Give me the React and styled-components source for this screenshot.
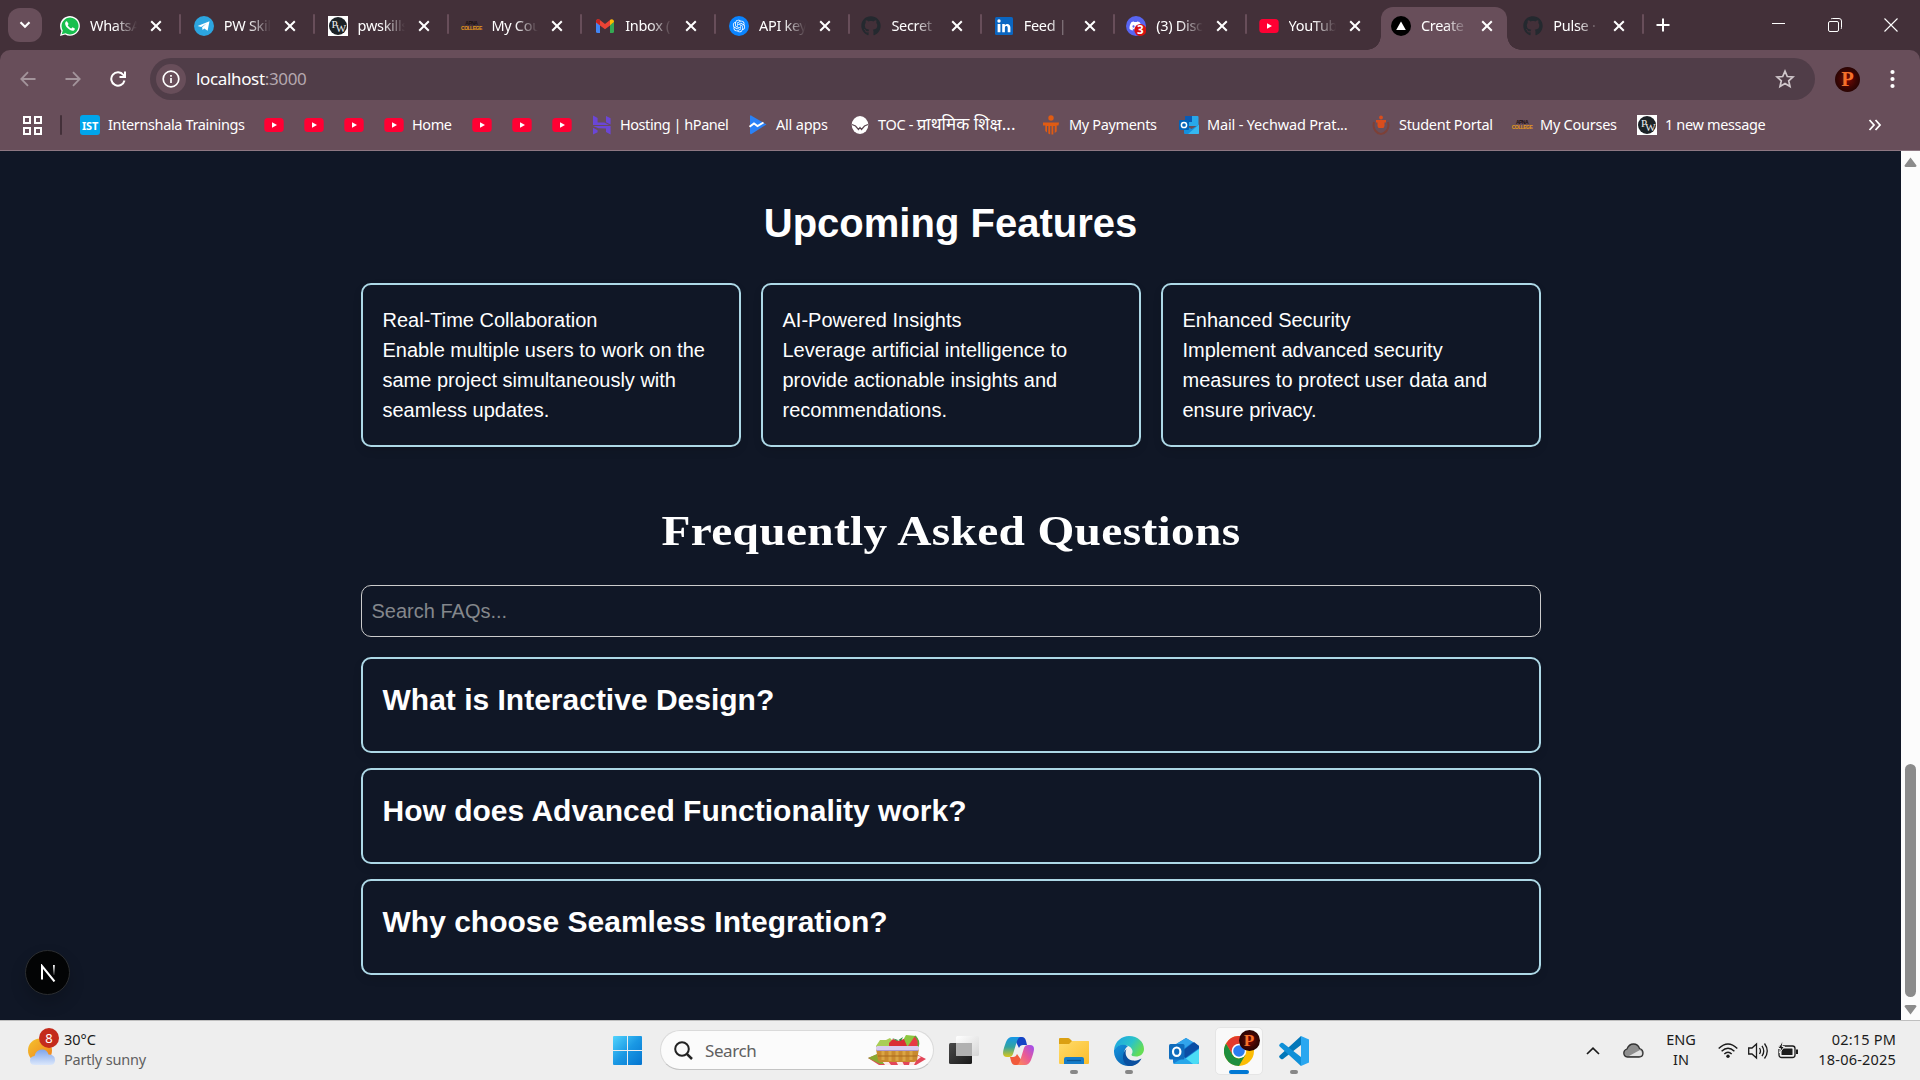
import React from "react";
import styled, { createGlobalStyle, css } from "styled-components";
import { FaGithub, FaDiscord } from "react-icons/fa";
import { RiOpenaiFill } from "react-icons/ri";

const UI = `"Noto Sans", "Open Sans", sans-serif`;
const C = {
  strip: "#433039",
  chrome: "#684e5a",
  omni: "#503d48",
  page: "#101726",
  taskbar: "#eeeeee",
};

const Global = createGlobalStyle`
  * { box-sizing: border-box; }
  body { margin: 0; background: ${C.strip}; overflow: hidden; }
  svg { display: block; flex: none; }
`;

const Screen = styled.div`
  width: 1920px;
  height: 1080px;
  display: flex;
  flex-direction: column;
  overflow: hidden;
  font-family: ${UI};
`;

/* ---------- tab strip ---------- */
const TabStrip = styled.div`
  height: 50px;
  flex: none;
  display: flex;
  background: ${C.strip};
  padding-left: 8px;
`;
const TabSearch = styled.div`
  width: 34px;
  height: 34px;
  margin: 8px 8px 0 0;
  border-radius: 12px;
  background: ${C.chrome};
  display: flex;
  align-items: center;
  justify-content: center;
`;
const TabCell = styled.div`
  flex: 0 0 ${(p) => p.$w}px;
  display: flex;
  padding-top: 7px;
`;
const Tab = styled.div`
  position: relative;
  width: 126px;
  height: 43px;
  padding: 0 0 6px 10px;
  display: flex;
  align-items: center;
  border-radius: 12px 12px 0 0;
  color: #fff;
  ${(p) =>
    p.$active &&
    css`
      background: ${C.chrome};
      &::before,
      &::after {
        content: "";
        position: absolute;
        bottom: 0;
        width: 14px;
        height: 14px;
      }
      &::before {
        left: -14px;
        background: radial-gradient(circle at 0 0, transparent 13.5px, ${C.chrome} 14px);
      }
      &::after {
        right: -14px;
        background: radial-gradient(circle at 100% 0, transparent 13.5px, ${C.chrome} 14px);
      }
    `}
`;
const TabTitle = styled.span`
  flex: 0 0 60px;
  margin: 0 0 2px 10px;
  white-space: nowrap;
  font-size: 14.5px;
  letter-spacing: -0.3px;
  line-height: 24px;
  mask-image: linear-gradient(90deg, #000 24px, transparent 47px);
`;
const TabDivider = styled.div`
  width: 2px;
  height: 20px;
  margin: 7px 0 0 3px;
  border-radius: 1px;
  background: ${(p) => (p.$hidden ? "transparent" : C.chrome)};
`;
const NewTab = styled.div`
  width: 34px;
  height: 50px;
  display: flex;
  align-items: center;
  justify-content: center;
`;
const WindowControls = styled.div`
  margin-left: auto;
  padding-right: 0.75px;
  display: flex;
  align-items: center;
  height: 49px;
`;
const WindowButton = styled.div`
  width: 56.5px;
  display: flex;
  justify-content: center;
`;

/* ---------- toolbar ---------- */
const Toolbar = styled.div`
  height: 50px;
  flex: none;
  display: flex;
  align-items: center;
  padding: 8px 0 0 13px;
  background: ${C.chrome};
  border-radius: 10px 10px 0 0;
`;
const NavButton = styled.div`
  width: 30px;
  margin-right: 15px;
  display: flex;
  justify-content: center;
`;
const Omnibox = styled.div`
  width: 1665px;
  height: 42px;
  margin-left: 2px;
  padding: 0 20px 0 6px;
  border-radius: 21px;
  background: ${C.omni};
  display: flex;
  align-items: center;
`;
const SiteInfo = styled.div`
  width: 30px;
  height: 30px;
  border-radius: 50%;
  background: ${C.chrome};
  display: flex;
  align-items: center;
  justify-content: center;
`;
const Address = styled.div`
  flex: 1;
  margin: 0 0 1px 10px;
  font-size: 17px;
  letter-spacing: -0.35px;
  color: #fff;
  span { color: #b5a8af; }
`;
const Avatar = styled.div`
  width: ${(p) => p.$size}px;
  height: ${(p) => p.$size}px;
  border-radius: 50%;
  background: radial-gradient(circle, #7a0a04 0%, #3a0503 50%, #120202 100%);
  color: #f5702a;
  font: bold ${(p) => p.$size * 0.82}px/${(p) => p.$size}px "Liberation Serif", serif;
  text-align: center;
`;
const ProfileSlot = styled.div`
  width: 65px;
  display: flex;
  justify-content: center;
`;

/* ---------- bookmarks ---------- */
const Bookmarks = styled.div`
  height: 51px;
  flex: none;
  display: flex;
  align-items: center;
  padding-left: 23px;
  background: ${C.chrome};
  border-bottom: 1px solid #8d7782;
`;
const BookmarkDivider = styled.div`
  width: 2px;
  height: 20px;
  margin: 0 18px;
  background: ${C.strip};
  border-radius: 1px;
`;
const Bookmark = styled.div`
  flex: 0 0 ${(p) => p.$w}px;
  height: 50px;
  display: flex;
  align-items: center;
  gap: 8px;
  color: #fff;
  font-size: 14.5px;
  letter-spacing: ${(p) => p.$ls}px;
  white-space: nowrap;
`;
const BookmarkLabel = styled.span`
  margin-bottom: 2px;
  line-height: 24px;
`;
const Hindi = styled.span`
  font-size: 17px;
  letter-spacing: 0;
`;
const FavBox = styled.span`
  width: 20px;
  height: 20px;
  flex: none;
  display: flex;
  align-items: center;
  justify-content: center;
`;
const Ist = styled(FavBox)`
  border-radius: 3px;
  background: #00a5ec;
  font-size: 11px;
  font-weight: 700;
  letter-spacing: -0.2px;
`;
const CollegeMark = styled(FavBox)`
  flex-direction: column;
  font: 900 5px/5px "Liberation Sans", sans-serif;
  letter-spacing: -0.5px;
  color: #1a1113;
  em { font-style: normal; color: #e59a1b; font-size: 5px; line-height: 5px; }
`;
const PwMark = styled(FavBox)`
  background: #fff;
  i {
    width: 18px;
    height: 18px;
    border-radius: 50%;
    background: #1c2226;
    color: #eee;
    font: 11px/10px "Liberation Serif", serif;
    padding: 2px 0 0 3px;
    letter-spacing: -1px;
    display: flex;
  }
  b { font-weight: 400; padding-top: 4px; margin-left: -1px; }
`;
const ShowMore = styled.div`
  margin-left: auto;
  padding-right: 38px;
`;

/* ---------- page ---------- */
const Viewport = styled.div`
  height: 869px;
  flex: none;
  display: flex;
  background: ${C.page};
`;
const Page = styled.main`
  position: relative;
  width: 1901px;
  color: #fff;
  font-family: "Liberation Sans", Arial, sans-serif;
  font-size: 20px;
  line-height: 30px;
`;
const Content = styled.div`
  width: 1180px;
  margin: 0 auto;
  padding-top: 42px;
`;
const Heading = styled.h2`
  margin: 0;
  height: 60px;
  text-align: center;
  font-size: 40px;
  line-height: 60px;
  font-weight: 700;
`;
const SerifHeading = styled(Heading)`
  margin-top: 54px;
  font-family: Georgia, "Liberation Serif", serif;
  font-size: 43px;
  letter-spacing: 0.3px;
  transform: scaleX(1.102);
`;
const CardGrid = styled.div`
  margin-top: 30px;
  display: grid;
  grid-template-columns: repeat(3, 1fr);
  gap: 20px;
`;
const outlined = css`
  border: 2px solid #add8e6;
  border-radius: 10px;
  box-shadow: 0 4px 8px rgba(0, 0, 0, 0.1);
`;
const Card = styled.article`
  ${outlined}
  height: 164px;
  padding: 20px;
  white-space: pre-line;
`;
const SearchField = styled.input`
  width: 100%;
  height: 52px;
  margin-top: 24px;
  padding: 10px;
  display: block;
  border: 1px solid #ccc;
  border-radius: 10px;
  background: transparent;
  color: #fff;
  font: inherit;
  &::placeholder { color: #84878c; opacity: 1; }
`;
const FaqList = styled.div`
  margin-top: 20px;
  display: flex;
  flex-direction: column;
  gap: 15px;
`;
const FaqItem = styled.article`
  ${outlined}
  height: 96px;
  padding: 18px 20px;
  font-size: 30px;
  line-height: 45px;
  font-weight: 700;
`;
const DevBadge = styled.div`
  position: absolute;
  left: 25px;
  bottom: 25px;
  width: 45px;
  height: 45px;
  padding-left: 1px;
  border-radius: 50%;
  background: #030405;
  border: 1px solid #2b2d30;
  box-shadow: 0 8px 16px rgba(0, 0, 0, 0.18);
  display: flex;
  align-items: center;
  justify-content: center;
`;
const ScrollTrack = styled.div`
  width: 19px;
  padding: 6px 0 5px;
  background: #fcfcfc;
  display: flex;
  flex-direction: column;
  align-items: center;
`;
const ScrollThumb = styled.div`
  width: 11px;
  height: 233px;
  margin: auto 0 8px;
  border-radius: 6px;
  background: #8b8b8b;
`;

/* ---------- taskbar ---------- */
const Taskbar = styled.div`
  height: 60px;
  flex: none;
  display: flex;
  align-items: center;
  background: ${C.taskbar};
  border-top: 1px solid #bfbfbf;
  color: #1b1b1b;
`;
const Weather = styled.div`
  width: 613px;
  padding-left: 26px;
  display: flex;
  gap: 3px;
  font-size: 14.5px;
  line-height: 20px;
`;
const WeatherIcon = styled.div`
  position: relative;
  width: 35px;
  height: 40px;
  padding-top: 6px;
`;
const WeatherText = styled.div`
  margin-top: -2px;
`;
const Count = styled.div`
  position: absolute;
  left: 13px;
  top: -3px;
  width: 20px;
  height: 20px;
  border-radius: 50%;
  background: #c42b1c;
  color: #fff;
  font-size: 13px;
  text-align: center;
`;
const Condition = styled.div`
  letter-spacing: -0.2px;
  color: #606060;
`;
const SearchPill = styled.div`
  width: 274px;
  height: 40px;
  margin: 0 2px 1px 18px;
  padding: 0 7px 0 13px;
  border: 1px solid #dadada;
  border-bottom-color: #c4c4c4;
  border-radius: 20px;
  background: #fbfbfb;
  display: flex;
  align-items: center;
  gap: 12px;
  font-size: 17px;
  letter-spacing: -0.4px;
  color: #606060;
  svg:last-child { margin-left: auto; }
`;
const Slot = styled.div`
  position: relative;
  width: 55px;
  height: 59px;
  display: flex;
  align-items: center;
  justify-content: center;
  &::after {
    content: "";
    position: absolute;
    bottom: 6px;
    width: ${(p) => (p.$current ? 20 : 8)}px;
    height: 4px;
    border-radius: 2px;
    background: ${(p) => (p.$current ? "#0078d4" : p.$open ? "#868686" : "transparent")};
  }
`;
const Tile = styled.div`
  position: relative;
  width: 48px;
  height: 48px;
  border-radius: 5px;
  background: #f9f9f9;
  border: 1px solid #e5e5e5;
  display: flex;
  align-items: center;
  justify-content: center;
`;
const TileBadge = styled.div`
  position: absolute;
  right: 2px;
  top: 2px;
`;
const Tray = styled.div`
  margin-left: auto;
  padding-right: 24px;
  display: flex;
  align-items: center;
  font-size: 14.5px;
  line-height: 20px;
`;
const TrayItem = styled.div`
  width: ${(p) => p.$w}px;
  display: flex;
  justify-content: center;
  text-align: center;
`;
const Language = styled(TrayItem)`
  margin-top: -3px;
`;
const Clock = styled.div`
  width: 89px;
  margin-top: -3px;
  text-align: right;
  white-space: nowrap;
  letter-spacing: 0.2px;
`;

/* ---------- drawings ---------- */
const Close = () => (
  <svg width="12" height="12" viewBox="0 0 12 12" stroke="#fff" strokeWidth="2"><path d="M1.2 1.2 10.8 10.8M10.8 1.2 1.2 10.8" /></svg>
);
const WhatsApp = () => (
  <svg width="20" height="20" viewBox="0 0 20 20">
    <path d="M0 20 1.4 14.9A9.9 9.9 0 1 1 5.2 18.6Z" fill="#fff" />
    <path d="M1.7 18.3 2.8 14.5A8.5 8.5 0 1 1 5.6 17.3Z" fill="#18bf4e" />
    <path d="M6.900 5.200c-.4-.1-1 0-1.400.700C4.400 7.600 5.700 10.200 7.500 12 9.500 14 12.300 15.300 13.900 14.400 14.700 13.900 15 13 14.800 12.500L12.500 11.300 11.300 12.600C9.800 12 8.500 10.800 7.700 9.300L8.600 8.100Z" fill="#fff" />
  </svg>
);
const Telegram = () => (
  <svg width="20" height="20" viewBox="0 0 20 20"><circle cx="10" cy="10" r="10" fill="#2ca5e0" /><path d="M3.600 9.900 15.500 5.200 13.600 14.800 10.300 12.400 8.600 14 8.100 11.300 12.500 7.400 7.200 10.900Z" fill="#fff" /></svg>
);
const Pw = () => <PwMark><i>P<b>W</b></i></PwMark>;
const College = () => <CollegeMark>APNA<em>COLLEGE</em></CollegeMark>;
const Gmail = () => (
  <svg width="20" height="20" viewBox="0 0 20 20">
    <path d="M1 6v9.500Q1 17 2.500 17H5V9Z" fill="#4285f4" /><path d="M19 6v9.500Q19 17 17.500 17H15V9Z" fill="#34a853" />
    <path d="M1 5.500Q1.300 2.200 4.300 3.500L10 8 15.700 3.500V9L10 13.200 5 9.500 1 6.500Z" fill="#ea4335" />
    <path d="M15 4 16.500 3.200Q19 3.200 19 6L15 9.300Z" fill="#fbbc04" /><path d="M1 6Q1 3.200 3.500 3.200L5 4V9.300Z" fill="#c5221f" />
  </svg>
);
const OpenAi = () => (
  <svg width="20" height="20" viewBox="0 0 20 20"><circle cx="10" cy="10" r="10" fill="#0a84ff" /><RiOpenaiFill x="2.5" y="2.5" size={15} color="#fff" /></svg>
);
const GitHub = () => <FaGithub size={20} color="#24292f" />;
const LinkedIn = () => (
  <svg width="20" height="20" viewBox="0 0 20 20"><rect x="1" y="1" width="18" height="18" rx="1.500" fill="#0a66c2" /><g fill="#fff"><circle cx="5" cy="5" r="1.700" /><path d="M3.600 8H6.400V16.300H3.600ZM8.200 8H10.800V9.200C12.500 7 16.400 7.600 16.400 11.500V16.300H13.700V12C13.700 9.400 10.900 9.500 10.900 12V16.300H8.200Z" /></g></svg>
);
const Discord = () => (
  <svg width="20" height="20" viewBox="0 0 20 20"><circle cx="10" cy="10" r="10" fill="#5865f2" /><FaDiscord x="3" y="3.500" size={13} color="#fff" /><circle cx="14.300" cy="14" r="6" fill="#d8100e" /><text x="14.300" y="18.200" fontSize="11.500" fontWeight="700" textAnchor="middle" fill="#fff" fontFamily="Noto Sans, sans-serif">3</text></svg>
);
const YouTube = () => (
  <svg width="20" height="20" viewBox="0 0 20 20"><rect x="0.300" y="3" width="19.400" height="14" rx="3.500" fill="#ff0033" /><path d="M8 7.200 13 10 8 12.800Z" fill="#fff" /></svg>
);
const Vercel = () => (
  <svg width="20" height="20" viewBox="0 0 20 20"><circle cx="10" cy="10" r="10" fill="#000" /><path d="M10 5.500 14.800 14H5.200Z" fill="#fff" /></svg>
);
const Hostinger = () => (
  <svg width="20" height="20" viewBox="0 0 20 20" fill="#6b46d6"><path d="M1 .5 5.600 3V7.500L12.500 7.600 17 10H1ZM14 1l4.600 2.300V9.500L14 7.200ZM1 19.500V12.800L5.600 15.300V17.300ZM1 11H18.600V19.500L14 17V13.500L6.500 13.300Z" /></svg>
);
const AllApps = () => (
  <svg width="20" height="20" viewBox="0 0 20 20"><path d="M2 .8Q2 0 3 .5L18.500 9.500 3.500 19Q2 19.500 2 18Z" fill="#2a82f7" /><path d="M1.500 11.800 6 8.500 9.500 11 15.500 7.500" fill="none" stroke="#fff" strokeWidth="2" /></svg>
);
const Toc = () => (
  <svg width="20" height="20" viewBox="0 0 20 20"><ellipse cx="10" cy="10" rx="8.300" ry="9" fill="#fff" /><path d="M2 9.500 5.500 11 8.500 14.500 10 12.500 11.500 14.500 14.500 11 18 9.500" fill="none" stroke="#59454f" strokeWidth="1.200" /></svg>
);
const Payments = () => (
  <svg width="20" height="20" viewBox="0 0 20 20" fill="#e05b13"><circle cx="10" cy="3" r="2.700" /><path d="M2 7.500H18L17.500 10.500H15.700V16.500L13.700 18V11H12.300V19.500H10.500V11H9.200V19.500L7.300 18.500V11H6V17.500L4.300 16V10.500H2Z" /></svg>
);
const MailFav = () => (
  <svg width="20" height="20" viewBox="0 0 20 20"><rect x="6" y="1" width="13.500" height="10" rx="1" fill="#28a8ea" /><path d="M6 1H13V7H6Z" fill="#0a5bb5" /><path d="M5 9.500 12.500 14 20 9.500V18Q20 19 19 19H6Q5 19 5 18Z" fill="#1490df" /><path d="M20 9.500V18Q20 19 19 19H9Z" fill="#35b8f1" /><rect x="0" y="5" width="10" height="10" rx="1" fill="#0364b8" /><circle cx="5" cy="10" r="2.600" fill="none" stroke="#fff" strokeWidth="1.500" /></svg>
);
const Student = () => (
  <svg width="20" height="20" viewBox="0 0 20 20"><path d="M3 7C1 15 7 19 10 19S19 15 17 7" fill="none" stroke="#7d4037" strokeWidth="2" /><g fill="#d94d1c"><circle cx="10" cy="2.500" r="1.900" /><path d="M5 5H15V7.500H13.500V11L12.500 13H7.500L6.500 11V7.500H5Z" /></g></svg>
);
const WindowsLogo = () => (
  <svg width="29" height="29" viewBox="0 0 29 29"><defs><linearGradient id="win" x1="0" y1="0" x2="29" y2="29" gradientUnits="userSpaceOnUse"><stop stopColor="#52d4fd" /><stop offset=".5" stopColor="#1a98e4" /><stop offset="1" stopColor="#0474cf" /></linearGradient></defs><path fill="url(#win)" d="M1 0H14V14H0V1Q0 0 1 0ZM15 0H28Q29 0 29 1V14H15ZM0 15H14V29H1Q0 29 0 28ZM15 15H29V28Q29 29 28 29H15Z" /></svg>
);
const Basket = () => (
  <svg width="58" height="32" viewBox="0 0 58 32">
    <path d="M0 24 10 20H48L58 25 48 31H11Z" fill="#e34658" /><path d="M0 24 9 20 20 30H12Z" fill="#8ba832" /><path d="M14 27h6l3 4h-6ZM28 27h6l2 4h-6ZM42 27h6l-2 4h-5ZM48 21l5 2-4 3Z" fill="#fde9e8" />
    <path d="M8 12 12 6 18 6 22 4 27 9V13H8Z" fill="#a9cd55" /><path d="M34 8 38 1 48 2 51 8V13H32Z" fill="#8cc63f" /><path d="M21 9 25 5 30 7 36 5 39 12H21Z" fill="#d92d35" /><path d="M24 4 29 7 35 3 33 7Z" fill="#2d8b3b" /><path d="M40 12 47 2Q52 7 50 12Z" fill="#e73a45" /><path d="M47 2Q52 7 50 12" fill="none" stroke="#5ba83b" strokeWidth="1.500" />
    <path d="M8 15H51L49 26Q48 28 46 28H13Q11 28 10 26Z" fill="#c98a2e" /><path d="M15 17v9M22 17v10M29 17v10M36 17v10M43 17v9" stroke="#dba544" strokeWidth="3" /><path d="M10 22H49" stroke="#a8691f" /><rect x="8" y="12" width="43" height="4.500" rx="1.500" fill="#d9ccf0" /><path d="M9 16.500H50" stroke="#a795cd" />
  </svg>
);
const TaskView = () => (
  <svg width="30" height="29" viewBox="0 0 30 29"><defs><linearGradient id="tv" x1="0" y1="0" x2="1" y2="1"><stop stopColor="#4a4a4a" /><stop offset="1" stopColor="#191919" /></linearGradient><linearGradient id="tw" x1="0" y1="0" x2="1" y2="1"><stop stopColor="#fff" /><stop offset="1" stopColor="#d5d5d5" /></linearGradient></defs><rect y="7" width="23" height="21" rx="1.500" fill="url(#tv)" /><rect x="7" y="0" width="23" height="20" rx="1.500" fill="url(#tw)" /><path d="M7 7H23V20H8Q7 20 7 19Z" fill="#b1b1b1" /></svg>
);
const Copilot = () => (
  <svg width="31" height="28" viewBox="0 0 31 28"><defs>
    <linearGradient id="ca" x1="0" y1="0" x2="0" y2="1"><stop stopColor="#1597e8" /><stop offset=".5" stopColor="#32a3a0" /><stop offset="1" stopColor="#dcc619" /></linearGradient>
    <linearGradient id="cb" x1="1" y1="0" x2="0" y2="1"><stop stopColor="#9a4df5" /><stop offset=".5" stopColor="#e95a96" /><stop offset="1" stopColor="#ff8d52" /></linearGradient></defs>
    <path d="M15 0H19Q22 0 23 4L24 8H20Q17 8 16 11L12 3Z" fill="#1444c5" />
    <path d="M9 0H17Q15 1 14 4L10 17Q9 20 6 20H4Q0 20 0 16Q0 13 3 5Q5 0 9 0Z" fill="url(#ca)" />
    <path d="M16 28H12Q9 28 8 24L7 20H10Q13 20 14 17L19 24Z" fill="#f15a3b" />
    <path d="M22 28H14Q16 27 17 24L21 11Q22 8 25 8H27Q31 8 31 12Q31 15 28 23Q26 28 22 28Z" fill="url(#cb)" />
  </svg>
);
const Explorer = () => (
  <svg width="30" height="28" viewBox="0 0 30 28"><defs><linearGradient id="ex" x1="0" y1="0" x2="1" y2="1"><stop stopColor="#ffdc6b" /><stop offset="1" stopColor="#fbbd2b" /></linearGradient></defs><path d="M0 2Q0 1 1 1H9Q10 1 11 2L13 4H28Q30 4 30 6V10H0Z" fill="#dba012" /><path d="M0 7H10L13 4H29Q30 4 30 5V26Q30 27 29 27H1Q0 27 0 26Z" fill="url(#ex)" /><path d="M5 27V22Q5 20 7 20H23Q25 20 25 22V27Z" fill="#157cc9" /><path d="M8 23.500H22" stroke="#0b5694" strokeWidth="1.300" /></svg>
);
const Edge = () => (
  <svg width="30" height="30" viewBox="0 0 30 30"><defs><linearGradient id="ea" x1="0" y1="0" x2="1" y2=".5"><stop stopColor="#1ca0e6" /><stop offset=".6" stopColor="#2bc3c9" /><stop offset="1" stopColor="#65dd55" /></linearGradient><linearGradient id="eb" x1="0" y1="0" x2="1" y2="1"><stop stopColor="#1595df" /><stop offset="1" stopColor="#0750a0" /></linearGradient></defs>
    <path d="M0 14C1 5 8 0 15 0 24 0 30 6 30 13 30 18 26 20.500 22 20.500 19 20.500 17 19.500 17.500 18.500 20 15.500 18 11 13 9.500 8 8 3 10 0 14Z" fill="url(#ea)" />
    <path d="M0 14C3 9 9 7.500 14 10 11 12 10 15 10.500 18 11.500 24 18 28 25 25.500 22 29 18 30 15 30 6 30-.5 23 0 14Z" fill="url(#eb)" />
    <path d="M12.500 13C10 18 13 24 19 24.500 22 25 25 24 27.500 22.500 25 27.500 20 30.500 15 30 8 28 7 18 12.500 13Z" fill="#0a4f9f" />
  </svg>
);
const Outlook = () => (
  <svg width="30" height="28" viewBox="0 0 30 28"><path d="M4 9 17 1 30 9V26Q30 27 28 27H6Q4 27 4 25Z" fill="#157fd4" /><path d="M4 9 17 1 24 5 8 17Z" fill="#31a4ec" /><path d="M8 18 25 5 30 9V11L12 24Z" fill="#0b4da4" /><path d="M9 27 30 12V25Q30 27 28 27Z" fill="#4bdcf5" /><path d="M4 27 15 20 24 27Z" fill="#27a7ea" /><rect x="0" y="7" width="15.500" height="15.500" rx="1.500" fill="#0f6cbd" /><ellipse cx="7.700" cy="14.700" rx="3.700" ry="4.200" fill="none" stroke="#fff" strokeWidth="2.200" /></svg>
);
const Chrome = () => (
  <svg width="30" height="30" viewBox="0 0 30 30"><circle cx="15" cy="15" r="15" fill="#fbbc04" /><path d="M2 7.500A15 15 0 0 1 28 7.500H15L8.500 18.800Z" fill="#e33b2e" /><path d="M2 7.500 8.500 18.800Q11 22.500 15 22.500L21.500 18.700 15 30A15 15 0 0 1 2 7.500Z" fill="#1e8e3e" /><circle cx="15" cy="15" r="7.300" fill="#fff" /><circle cx="15" cy="15" r="5.800" fill="#2b7cf0" /></svg>
);
const VsCode = () => (
  <svg width="30" height="30" viewBox="0 0 30 30"><path d="M22 0 30 3.500V26.500L22 30Z" fill="#2aa7f0" /><path d="M22 0V9L4 23Q3 23.700 2 23L.5 21.500Q-.3 20.500 .7 19.600Z" fill="#0277b9" /><path d="M22 30V21L4 7Q3 6.300 2 7L.5 8.500Q-.3 9.500 .7 10.400Z" fill="#1090d8" /></svg>
);
const WeatherArt = () => (
  <svg width="30" height="30" viewBox="0 0 30 30"><defs><linearGradient id="sun" x1="0" y1="0" x2="1" y2="1"><stop stopColor="#f3c22e" /><stop offset="1" stopColor="#f07d1b" /></linearGradient><linearGradient id="cl" x1="0" y1="0" x2="0" y2="1"><stop stopColor="#7ea5ec" /><stop offset="1" stopColor="#dbe7fb" /></linearGradient></defs><circle cx="14" cy="13.500" r="12" fill="url(#sun)" /><path d="M9 28Q4 28 4 23.500 4 19.500 8.500 19 10 12.500 16 12.500 21 12.500 22.500 17.500 29 17.500 29 23 29 28 24 28Z" fill="url(#cl)" /></svg>
);

const tabs = [
  ["WhatsA", WhatsApp], ["PW Skil", Telegram], ["pwskills", Pw], ["My Cou", College],
  ["Inbox (", Gmail], ["API key", OpenAi], ["Secret", GitHub], ["Feed |", LinkedIn],
  ["(3) Disc", Discord], ["YouTub", YouTube], ["Create", Vercel], ["Pulse ·", GitHub],
];
const ACTIVE = 10;

const bookmarks = [
  [() => <Ist>IST</Ist>, "Internshala Trainings", 184, -0.37],
  [YouTube, "", 40, 0], [YouTube, "", 40, 0], [YouTube, "", 40, 0],
  [YouTube, "Home", 88, -0.4], [YouTube, "", 40, 0], [YouTube, "", 40, 0], [YouTube, "", 40, 0],
  [Hostinger, "Hosting | hPanel", 156, -0.45], [AllApps, "All apps", 102, -0.2],
  [Toc, <>TOC - <Hindi>प्राथमिक शिक्ष...</Hindi></>, 191, -0.3], [Payments, "My Payments", 138, -0.35],
  [MailFav, "Mail - Yechwad Prat...", 192, -0.17], [Student, "Student Portal", 141, -0.3],
  [College, "My Courses", 125, -0.25], [Pw, "1 new message", 130, -0.35],
];

const features = [
  ["Real-Time Collaboration", "Enable multiple users to work on the same project simultaneously with seamless updates."],
  ["AI-Powered Insights", "Leverage artificial intelligence to provide actionable insights and recommendations."],
  ["Enhanced Security", "Implement advanced security measures to protect user data and ensure privacy."],
];
const faqs = ["What is Interactive Design?", "How does Advanced Functionality work?", "Why choose Seamless Integration?"];

export default function App() {
  return (
    <Screen>
      <Global />
      <TabStrip>
        <TabSearch><svg width="12" height="8" viewBox="0 0 12 8" fill="none" stroke="#fff" strokeWidth="2.200"><path d="M1.500 1.300 6 5.800 10.500 1.300" /></svg></TabSearch>
        {tabs.map(([title, Icon], i) => (
          <TabCell key={i} $w={i < 5 ? 133.8 : 132.4}>
            <Tab $active={i === ACTIVE}><Icon /><TabTitle>{title}</TabTitle><Close /></Tab>
            <TabDivider $hidden={i === ACTIVE || i === ACTIVE - 1} />
          </TabCell>
        ))}
        <NewTab><svg width="14" height="14" viewBox="0 0 14 14" stroke="#fff" strokeWidth="2"><path d="M7 .5V13.500M.5 7H13.500" /></svg></NewTab>
        <WindowControls>
          <WindowButton><svg width="13" height="13" viewBox="0 0 13 13" stroke="#fff"><path d="M0 5.500H13" /></svg></WindowButton>
          <WindowButton><svg width="14" height="14" viewBox="0 0 14 14" fill="none" stroke="#fff"><rect x=".5" y="3.500" width="10" height="10" rx="1.500" /><path d="M3 1Q3.500 .5 4.500 .5H11Q13.500 .5 13.500 3V9.500Q13.500 10.500 13 11" /></svg></WindowButton>
          <WindowButton><svg width="14" height="14" viewBox="0 0 14 14" stroke="#fff" strokeWidth="1.100"><path d="M.5 .5 13.500 13.500M13.500 .5 .5 13.500" /></svg></WindowButton>
        </WindowControls>
      </TabStrip>

      <Toolbar>
        <NavButton><svg width="16" height="16" viewBox="0 0 16 16" fill="none" stroke="#a3949b" strokeWidth="1.800"><path d="M15.500 8H1.500M8 1.200 1.300 8 8 14.800" /></svg></NavButton>
        <NavButton><svg width="16" height="16" viewBox="0 0 16 16" fill="none" stroke="#a3949b" strokeWidth="1.800"><path d="M.5 8H14.500M8 1.200 14.700 8 8 14.800" /></svg></NavButton>
        <NavButton><svg width="16" height="16" viewBox="0 0 16 16" fill="none" stroke="#fff" strokeWidth="2"><path d="M14.500 9.500A6.700 6.700 0 1 1 13.400 4L14.500 5.500" /><path d="M15 .5V6H9.500" /></svg></NavButton>
        <Omnibox>
          <SiteInfo><svg width="18" height="18" viewBox="0 0 18 18" fill="none" stroke="#fff" strokeWidth="1.700"><circle cx="9" cy="9" r="7.800" /><path d="M9 8V13M9 5V6.700" /></svg></SiteInfo>
          <Address>localhost<span>:3000</span></Address>
          <svg width="20" height="20" viewBox="0 0 20 20" fill="none" stroke="#d0c7cb" strokeWidth="1.700"><path d="M10 2.200 12.300 7.500 18 8 13.700 11.800 15 17.500 10 14.500 5 17.500 6.300 11.800 2 8 7.700 7.500Z" /></svg>
        </Omnibox>
        <ProfileSlot><Avatar $size={25}>P</Avatar></ProfileSlot>
        <svg width="25" height="20" viewBox="0 0 25 20" fill="#fff"><circle cx="12.500" cy="3" r="2.100" /><circle cx="12.500" cy="10" r="2.100" /><circle cx="12.500" cy="17" r="2.100" /></svg>
      </Toolbar>

      <Bookmarks>
        <svg width="19" height="19" viewBox="0 0 19 19" fill="none" stroke="#fff" strokeWidth="2"><path d="M1 1H7V7H1ZM12 1H18V7H12ZM1 12H7V18H1ZM12 12H18V18H12Z" /></svg>
        <BookmarkDivider />
        {bookmarks.map(([Icon, label, w, ls], i) => (
          <Bookmark key={i} $w={w} $ls={ls}><Icon />{label && <BookmarkLabel>{label}</BookmarkLabel>}</Bookmark>
        ))}
        <ShowMore><svg width="14" height="12" viewBox="0 0 14 12" fill="none" stroke="#fff" strokeWidth="1.800"><path d="M1.500 1 6 6 1.500 11M7.500 1 12 6 7.500 11" /></svg></ShowMore>
      </Bookmarks>

      <Viewport>
        <Page>
          <Content>
            <Heading>Upcoming Features</Heading>
            <CardGrid>
              {features.map(([title, body]) => <Card key={title}>{title + "\n" + body}</Card>)}
            </CardGrid>
            <SerifHeading>Frequently Asked Questions</SerifHeading>
            <SearchField placeholder="Search FAQs..." />
            <FaqList>{faqs.map((q) => <FaqItem key={q}>{q}</FaqItem>)}</FaqList>
          </Content>
          <DevBadge>
            <svg width="17" height="18" viewBox="0 0 17 18" fill="none" strokeWidth="2"><defs><linearGradient id="n1" x1="0" y1="0" x2="0" y2="1"><stop stopColor="#fff" /><stop offset="1" stopColor="#fff" stopOpacity=".1" /></linearGradient></defs><path d="M2 15.500V2L14.500 17.500" stroke="#fff" /><rect x="13" y="1" width="1.800" height="10" fill="url(#n1)" /></svg>
          </DevBadge>
        </Page>
        <ScrollTrack>
          <svg width="13" height="10" viewBox="0 0 13 10" fill="#8b8b8b"><path d="M6.500 .5 12.500 8.500Q12.500 10 11 10H2Q.5 10 .5 8.500Z" /></svg>
          <ScrollThumb />
          <svg width="13" height="10" viewBox="0 0 13 10" fill="#8b8b8b"><path d="M6.500 9.500 12.500 1.500Q12.500 0 11 0H2Q.5 0 .5 1.500Z" /></svg>
        </ScrollTrack>
      </Viewport>

      <Taskbar>
        <Weather>
          <WeatherIcon><WeatherArt /><Count>8</Count></WeatherIcon>
          <WeatherText>30°C<Condition>Partly sunny</Condition></WeatherText>
        </Weather>
        <WindowsLogo />
        <SearchPill>
          <svg width="19" height="19" viewBox="0 0 19 19" fill="none" stroke="#222" strokeWidth="2"><circle cx="8" cy="8" r="6.800" /><path d="M12.800 12.800 18 18" strokeWidth="2.500" /></svg>
          Search
          <Basket />
        </SearchPill>
        <Slot><TaskView /></Slot>
        <Slot><Copilot /></Slot>
        <Slot $open><Explorer /></Slot>
        <Slot $open><Edge /></Slot>
        <Slot><Outlook /></Slot>
        <Slot $current><Tile><Chrome /><TileBadge><Avatar $size={21}>P</Avatar></TileBadge></Tile></Slot>
        <Slot $open><VsCode /></Slot>
        <Tray>
          <TrayItem $w={40}><svg width="14" height="8" viewBox="0 0 14 8" fill="none" stroke="#1b1b1b" strokeWidth="1.700"><path d="M1 7 7 1.200 13 7" /></svg></TrayItem>
          <TrayItem $w={40}><svg width="21" height="15" viewBox="0 0 21 15"><path d="M4.500 14Q.8 13.500 .8 10 .8 7 4 6 6 1 10.500 1 15 1 16.500 5.500 20 6.500 20 10 20 14 16 14Z" fill="#8e8e8e" stroke="#333" strokeWidth="1.300" /><path d="M6 13 17 7Q19 8 19 10.500 19 13 16 13Z" fill="#e2e2e2" /></svg></TrayItem>
          <Language $w={56}>ENG<br />IN</Language>
          <TrayItem $w={38}><svg width="20" height="16" viewBox="0 0 20 16" fill="none" stroke="#1b1b1b" strokeWidth="1.400"><path d="M.7 5.500Q10-3.500 19.300 5.500M3.600 8.300Q10 2 16.400 8.300M6.300 11Q10 7.500 13.700 11" /><circle cx="10" cy="13.300" r="1.700" fill="#1b1b1b" stroke="none" /></svg></TrayItem>
          <TrayItem $w={22}><svg width="21" height="18" viewBox="0 0 21 18" fill="none" stroke="#1b1b1b" strokeWidth="1.300"><path d="M.7 6V12H4L8.500 16V2L4 6ZM11.500 6Q13.500 9 11.500 12M14 3.800Q17.500 9 14 14.200M16.500 1.500Q22 9 16.500 16.500" /></svg></TrayItem>
          <TrayItem $w={38}><svg width="20" height="17" viewBox="0 0 20 17"><rect x="1" y="4" width="16" height="11.500" rx="2.500" fill="none" stroke="#1b1b1b" strokeWidth="1.300" /><rect x="3.500" y="6.500" width="11" height="6.500" rx=".5" fill="#1b1b1b" /><path d="M18 7.500H20V12H18Z" fill="#1b1b1b" /><path d="M4 0 0 6.500H2.500L1.500 11 6.500 4.500H4L5 0Z" fill="#1b1b1b" stroke="#eee" strokeWidth="1" /></svg></TrayItem>
          <Clock>02:15 PM<br />18-06-2025</Clock>
        </Tray>
      </Taskbar>
    </Screen>
  );
}
